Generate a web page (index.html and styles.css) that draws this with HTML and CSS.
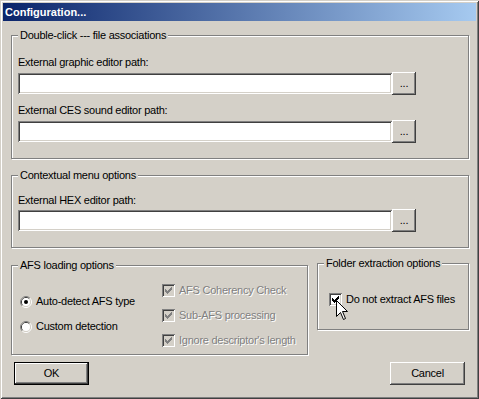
FILE: index.html
```html
<!DOCTYPE html>
<html lang="en">
<head>
<meta charset="utf-8">
<title>Configuration...</title>
<link rel="stylesheet" href="styles.css">
</head>
<body>
<div class="window">
  <div class="titlebar">Configuration...</div>
  <div class="client">
    <fieldset class="group g1">
      <legend>Double-click --- file associations</legend>
      <div class="lbl l1">External graphic editor path:</div>
      <div class="pathrow r1"><input class="path" type="text"><button class="btn browse">...</button></div>
      <div class="lbl l2">External CES sound editor path:</div>
      <div class="pathrow r2"><input class="path" type="text"><button class="btn browse">...</button></div>
    </fieldset>

    <fieldset class="group g2">
      <legend>Contextual menu options</legend>
      <div class="lbl l3">External HEX editor path:</div>
      <div class="pathrow r3"><input class="path" type="text"><button class="btn browse">...</button></div>
    </fieldset>

    <div class="lower">
      <fieldset class="group g3">
        <legend>AFS loading options</legend>
        <div class="cols">
          <div class="radios">
            <div class="opt">
              <svg class="radio" width="12" height="12" viewBox="0 0 12 12">
                <path d="M2.11 9.89A5.5 5.5 0 0 1 9.89 2.11" fill="none" stroke="#808080"/>
                <path d="M9.89 2.11A5.5 5.5 0 0 1 2.11 9.89" fill="none" stroke="#fff"/>
                <path d="M2.82 9.18A4.5 4.5 0 0 1 9.18 2.82" fill="none" stroke="#404040"/>
                <path d="M9.18 2.82A4.5 4.5 0 0 1 2.82 9.18" fill="none" stroke="#d4d0c8"/>
                <circle cx="6" cy="6" r="4" fill="#fff"/>
                <circle cx="6" cy="6" r="2" fill="#000"/>
              </svg>
              <span>Auto-detect AFS type</span>
            </div>
            <div class="opt">
              <svg class="radio" width="12" height="12" viewBox="0 0 12 12">
                <path d="M2.11 9.89A5.5 5.5 0 0 1 9.89 2.11" fill="none" stroke="#808080"/>
                <path d="M9.89 2.11A5.5 5.5 0 0 1 2.11 9.89" fill="none" stroke="#fff"/>
                <path d="M2.82 9.18A4.5 4.5 0 0 1 9.18 2.82" fill="none" stroke="#404040"/>
                <path d="M9.18 2.82A4.5 4.5 0 0 1 2.82 9.18" fill="none" stroke="#d4d0c8"/>
                <circle cx="6" cy="6" r="4" fill="#fff"/>
              </svg>
              <span>Custom detection</span>
            </div>
          </div>
          <div class="checks">
            <div class="opt disabled">
              <span class="cb"><svg width="13" height="13" viewBox="0 0 13 13"><path d="M9 3h1v1h-1zM8 4h2v1h-2zM3 5h1v1h-1zM7 5h3v1h-3zM3 6h2v1h-2zM6 6h3v1h-3zM3 7h5v1h-5zM4 8h3v1h-3zM5 9h1v1h-1z" fill="currentColor"/></svg></span>
              <span>AFS Coherency Check</span>
            </div>
            <div class="opt disabled">
              <span class="cb"><svg width="13" height="13" viewBox="0 0 13 13"><path d="M9 3h1v1h-1zM8 4h2v1h-2zM3 5h1v1h-1zM7 5h3v1h-3zM3 6h2v1h-2zM6 6h3v1h-3zM3 7h5v1h-5zM4 8h3v1h-3zM5 9h1v1h-1z" fill="currentColor"/></svg></span>
              <span>Sub-AFS processing</span>
            </div>
            <div class="opt disabled">
              <span class="cb"><svg width="13" height="13" viewBox="0 0 13 13"><path d="M9 3h1v1h-1zM8 4h2v1h-2zM3 5h1v1h-1zM7 5h3v1h-3zM3 6h2v1h-2zM6 6h3v1h-3zM3 7h5v1h-5zM4 8h3v1h-3zM5 9h1v1h-1z" fill="currentColor"/></svg></span>
              <span>Ignore descriptor's length</span>
            </div>
          </div>
        </div>
      </fieldset>

      <fieldset class="group g4">
        <legend>Folder extraction options</legend>
        <div class="opt folder">
          <span class="cb"><svg width="13" height="13" viewBox="0 0 13 13"><path d="M9 3h1v1h-1zM8 4h2v1h-2zM3 5h1v1h-1zM7 5h3v1h-3zM3 6h2v1h-2zM6 6h3v1h-3zM3 7h5v1h-5zM4 8h3v1h-3zM5 9h1v1h-1z" fill="currentColor"/></svg></span>
          <span>Do not extract AFS files</span>
          <svg class="cursor" width="12" height="20" viewBox="0 0 12 20"><path d="M0.5 0.5V16.5L4.5 12.5L7.5 19.5L9.5 18.5L6.5 11.5H11.5Z" fill="#fff" stroke="#000" stroke-linejoin="miter"/></svg>
        </div>
      </fieldset>
    </div>

    <div class="buttons">
      <button class="btn dlg default">OK</button>
      <button class="btn dlg">Cancel</button>
    </div>
  </div>
</div>
</body>
</html>
```
FILE: styles.css
```css
* { box-sizing: border-box; }
html, body { margin: 0; padding: 0; }
body {
  width: 479px;
  height: 399px;
  overflow: hidden;
  background: #d4d0c8;
  font-family: "Liberation Sans", Arial, sans-serif;
  font-size: 11px;
  letter-spacing: -0.25px;
  color: #000;
}
.window {
  width: 479px;
  height: 399px;
  padding: 3px;
  background: #d4d0c8;
  box-shadow: inset 1px 1px #d4d0c8, inset -1px -1px #404040, inset 2px 2px #fff, inset -2px -2px #808080;
}
.titlebar {
  height: 18px;
  line-height: 18px;
  padding-left: 2px;
  background: linear-gradient(to right, #0a246a, #a6caf0);
  color: #fff;
  font-weight: bold;
  letter-spacing: 0;
}
.client { padding: 0 7px 0 8px; }

.group {
  margin: 0;
  padding: 0 6px;
  min-width: 0;
  border: 1px solid #808080;
  box-shadow: inset 1px 1px #fff, 1px 1px #fff;
}
.group legend {
  padding: 0 2px;
  margin: 0;
  line-height: 13px;
  background: #d4d0c8;
}
.g1 { margin-top: 8px; padding-bottom: 15px; }
.g2 { margin-top: 10px; padding-bottom: 15px; }

.lbl { line-height: 13px; }
.l1 { margin-top: 14px; }
.l2 { margin-top: 9px; }
.l3 { margin-top: 12px; }
.pathrow { display: flex; align-items: center; height: 23px; }
.r1, .r2 { margin-top: 3px; }
.r3 { margin-top: 2px; }

.path {
  width: 374px;
  height: 21px;
  margin: 0;
  padding: 0 3px;
  border: 0;
  outline: none;
  background: #fff;
  font: inherit;
  box-shadow: inset 1px 1px #808080, inset -1px -1px #fff, inset 2px 2px #404040, inset -2px -2px #d4d0c8;
}

.btn {
  -webkit-appearance: none;
  appearance: none;
  margin: 0;
  padding: 0;
  border: 0;
  background: #d4d0c8;
  color: #000;
  font: inherit;
  letter-spacing: inherit;
  box-shadow: inset -1px -1px #404040, inset 1px 1px #fff, inset -2px -2px #808080;
}
.browse { width: 24px; height: 23px; line-height: 23px; }

.lower { display: flex; align-items: flex-start; gap: 9px; }
.g3 { width: 297px; margin-top: 11px; padding-bottom: 7px; }
.g4 { width: 152px; margin-top: 9px; padding-top: 23px; padding-bottom: 23px; }

.cols { display: flex; }
.radios {
  width: 144px;
  padding: 23px 0 0 2px;
  display: flex;
  flex-direction: column;
  gap: 12px;
}
.checks {
  padding-top: 12px;
  display: flex;
  flex-direction: column;
  gap: 12px;
}
.opt {
  display: flex;
  align-items: center;
  height: 13px;
  line-height: 13px;
  white-space: nowrap;
}
.radio { flex: none; margin-right: 4px; }
.cb {
  flex: none;
  width: 13px;
  height: 13px;
  margin-right: 4px;
  background: #fff;
  color: #000;
  box-shadow: inset 1px 1px #808080, inset -1px -1px #fff, inset 2px 2px #404040, inset -2px -2px #d4d0c8;
}
.cb svg { display: block; }
.disabled { color: #808080; }
.disabled span { text-shadow: 1px 1px 0 #fff; }
.disabled .cb { background: #d4d0c8; color: #808080; text-shadow: none; }

.folder { position: relative; margin-left: 5px; }
.cursor { position: absolute; left: 7px; top: 7px; }

.buttons {
  display: flex;
  justify-content: space-between;
  margin-top: 7px;
  padding: 0 4px 0 3px;
}
.dlg { width: 75px; height: 23px; line-height: 21px; }
.default {
  border: 1px solid #000;
  box-shadow: inset -1px -1px #404040, inset 1px 1px #fff, inset -2px -2px #808080;
}
```
